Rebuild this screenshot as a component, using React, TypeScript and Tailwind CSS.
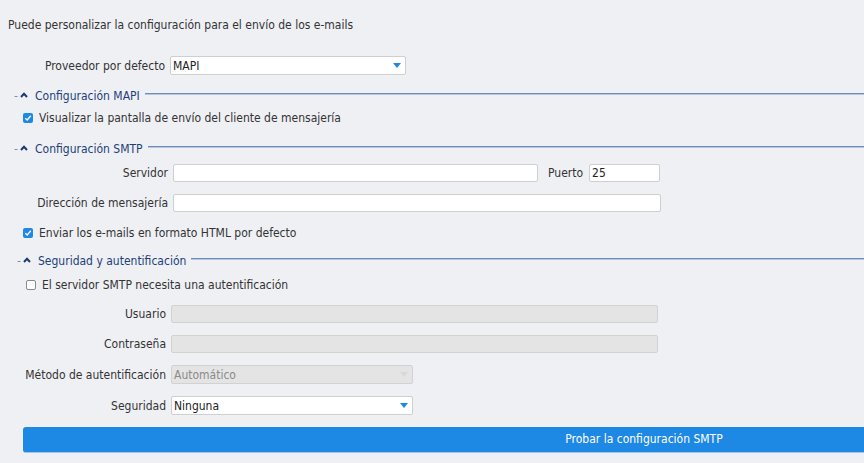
import { ReactNode } from 'react';

const FONT = "font-['DejaVu_Sans_Condensed','Liberation_Sans',sans-serif]";

function Caret() {
  return (
    <svg width="8" height="6" viewBox="0 0 8 6" className="shrink-0">
      <path d="M1 5 L4 1.8 L7 5" fill="none" stroke="#1b3a6e" strokeWidth="2" />
    </svg>
  );
}

function SectionHeader({ title, indent }: { title: string; indent: string }) {
  return (
    <div className={`flex h-[14px] items-center ${indent}`}>
      <span className="w-[5px] shrink-0 text-[#7b8fb0] leading-[14px]">-</span>
      <span className="ml-[1px] mr-[7px] -mt-[3px]">
        <Caret />
      </span>
      <span className="shrink-0 leading-[14px] text-[#1d3f78]">{title}</span>
      <div className="ml-[5px] -mt-[5px] h-[2px] flex-1 border-t border-[#6e8cbb] bg-[#b8c6dd]" />
    </div>
  );
}

function Check({ on }: { on: boolean }) {
  if (on) {
    return (
      <span className="flex h-[10px] w-[10px] shrink-0 items-center justify-center rounded-[2px] bg-[#1e88e5]">
        <svg width="8" height="8" viewBox="0 0 8 8">
          <path d="M1.3 4.2 L3.2 6 L6.8 1.8" fill="none" stroke="#fff" strokeWidth="1.4" />
        </svg>
      </span>
    );
  }
  return <span className="h-[10px] w-[10px] shrink-0 rounded-[2px] border border-[#8a8a8a] bg-white" />;
}

function CheckRow({ on, label, pad }: { on: boolean; label: string; pad: string }) {
  return (
    <div className={`flex h-[14px] items-center gap-[6px] ${pad}`}>
      <Check on={on} />
      <span className="leading-[14px]">{label}</span>
    </div>
  );
}

function Row({ label, labelW, children }: { label: string; labelW: string; children: ReactNode }) {
  return (
    <div className="flex items-center">
      <div className={`${labelW} shrink-0 text-right leading-[14px]`}>{label}</div>
      {children}
    </div>
  );
}

function Field({ w, value, disabled }: { w: string; value?: string; disabled?: boolean }) {
  return (
    <div
      className={`flex h-[18px] items-center rounded-[2px] border px-[2px] leading-[14px] ${w} ${
        disabled ? 'border-[#d2d2d2] bg-[#e4e4e4] text-[#8a8a8a]' : 'border-[#cfcfcf] bg-white text-[#222]'
      }`}
    >
      {value}
    </div>
  );
}

function Select({ w, value, disabled }: { w: string; value: string; disabled?: boolean }) {
  return (
    <div
      className={`flex h-[19px] items-center justify-between rounded-[2px] border pl-[2px] pr-[4px] leading-[14px] ${w} ${
        disabled ? 'border-[#d2d2d2] bg-[#e4e4e4] text-[#8a8a8a]' : 'border-[#cfcfcf] bg-white text-[#222]'
      }`}
    >
      <span>{value}</span>
      <svg width="8" height="5" viewBox="0 0 8 5">
        <path d="M0 0 H8 L4 5 Z" fill={disabled ? '#d8d8d8' : '#1e88e5'} />
      </svg>
    </div>
  );
}

export default function App() {
  return (
    <div className={`h-[463px] w-[864px] overflow-hidden bg-[#eff0f4] text-[12px] text-[#333] ${FONT}`}>
      <div className="h-[32px] pl-[8px] pt-[18px] leading-[14px]">
        Puede personalizar la configuración para el envío de los e-mails
      </div>

      <div className="mt-[24px]">
        <Row label="Proveedor por defecto" labelW="w-[165px]">
          <div className="ml-[5px]">
            <Select w="w-[236px]" value="MAPI" />
          </div>
        </Row>
      </div>

      <div className="mt-[14px]">
        <SectionHeader title="Configuración MAPI" indent="pl-[14px]" />
      </div>
      <div className="mt-[8px]">
        <CheckRow on label="Visualizar la pantalla de envío del cliente de mensajería" pad="pl-[23px]" />
      </div>

      <div className="mt-[17px]">
        <SectionHeader title="Configuración SMTP" indent="pl-[14px]" />
      </div>
      <div className="mt-[8px]">
        <Row label="Servidor" labelW="w-[168px]">
          <div className="ml-[5px] flex items-center">
            <Field w="w-[365px]" />
            <span className="ml-[10px] mr-[6px] leading-[14px]">Puerto</span>
            <Field w="w-[71px]" value="25" />
          </div>
        </Row>
      </div>
      <div className="mt-[12px]">
        <Row label="Dirección de mensajería" labelW="w-[168px]">
          <div className="ml-[5px]">
            <Field w="w-[488px]" />
          </div>
        </Row>
      </div>
      <div className="mt-[14px]">
        <CheckRow on label="Enviar los e-mails en formato HTML por defecto" pad="pl-[23px]" />
      </div>

      <div className="mt-[14px]">
        <SectionHeader title="Seguridad y autentificación" indent="pl-[17px]" />
      </div>
      <div className="mt-[10px]">
        <CheckRow on={false} label="El servidor SMTP necesita una autentificación" pad="pl-[26px]" />
      </div>
      <div className="mt-[13px]">
        <Row label="Usuario" labelW="w-[166px]">
          <div className="ml-[5px]">
            <Field w="w-[487px]" disabled />
          </div>
        </Row>
      </div>
      <div className="mt-[12px]">
        <Row label="Contraseña" labelW="w-[166px]">
          <div className="ml-[5px]">
            <Field w="w-[487px]" disabled />
          </div>
        </Row>
      </div>
      <div className="mt-[12px]">
        <Row label="Método de autentificación" labelW="w-[166px]">
          <div className="ml-[5px]">
            <Select w="w-[242px]" value="Automático" disabled />
          </div>
        </Row>
      </div>
      <div className="mt-[12px]">
        <Row label="Seguridad" labelW="w-[166px]">
          <div className="ml-[5px]">
            <Select w="w-[242px]" value="Ninguna" />
          </div>
        </Row>
      </div>

      <div className="ml-[23px] mt-[12px] w-[1242px]">
        <button className="h-[26px] w-full rounded-[3px] border-b border-[#9cc6ef] bg-[#1e88e5] text-center text-[12px] leading-[25px] text-white">
          Probar la configuración SMTP
        </button>
      </div>
    </div>
  );
}
